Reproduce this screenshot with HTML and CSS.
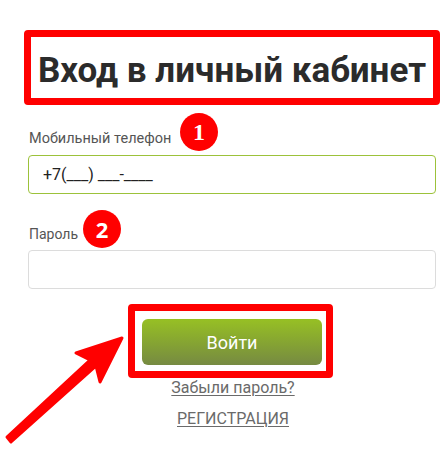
FILE: index.html
```html
<!DOCTYPE html>
<html lang="ru">
<head>
<meta charset="utf-8">
<title>Вход в личный кабинет</title>
<link rel="stylesheet" href="styles.css">
</head>
<body>
<div class="page">
  <div class="title-box">
    <h1 class="title">Вход в личный кабинет</h1>
  </div>
  <form class="form">
    <div class="field field-phone">
      <label class="label">Мобильный телефон</label>
      <span class="badge badge-1">1</span>
      <div class="input input-active">+7(___) ___-____</div>
    </div>
    <div class="field field-pass">
      <label class="label">Пароль</label>
      <span class="badge badge-2">2</span>
      <div class="input"></div>
    </div>
    <div class="btn-frame">
      <button type="button" class="btn">Войти</button>
    </div>
    <div class="links">
      <a class="link" href="#">Забыли пароль?</a>
      <a class="link link-reg" href="#">РЕГИСТРАЦИЯ</a>
    </div>
  </form>
  <svg class="arrow" width="448" height="452" viewBox="0 0 448 452">
    <polygon points="122,338 76,353 90,360 7,437 11,442 96,366 100,382" fill="#ff0000" stroke="#ff0000" stroke-width="3" stroke-linejoin="round"/>
  </svg>
</div>
</body>
</html>
```

FILE: styles.css
```css
* { box-sizing: border-box; }
html, body { margin: 0; padding: 0; background: #fff; }
body { font-family: Roboto, "Liberation Sans", Arial, sans-serif; }

.page {
  position: relative;
  width: 448px;
  height: 452px;
  overflow: hidden;
  padding-top: 30px;
}

.title-box {
  margin-left: 24px;
  width: 416px;
  height: 75px;
  border: 7px solid #ff0000;
  border-radius: 4px;
  padding-top: 14px;
}

.title {
  margin: 0;
  font-size: 35px;
  line-height: 40px;
  font-weight: 700;
  color: #2b2b2b;
  text-align: center;
  white-space: nowrap;
}

.form {
  margin: 0 0 0 28px;
  width: 408px;
  display: flex;
  flex-direction: column;
}

.field { position: relative; }
.field-phone { margin-top: 25px; }
.field-pass { margin-top: 31px; }

.label {
  display: block;
  font-size: 14px;
  line-height: 18px;
  color: #555;
  margin-left: 1px;
  margin-bottom: 7px;
}

.field-phone .label { font-size: 14.5px; }

.badge {
  position: absolute;
  width: 38px;
  height: 38px;
  border-radius: 50%;
  background: #ff0000;
  color: #fff;
  font-weight: 700;
  font-size: 22px;
  line-height: 38px;
  text-align: center;
}
.badge-1 { top: -17px; left: 152px; font-family: "Liberation Serif", serif; font-size: 24px; }
.badge-2 { top: -15px; left: 55px; font-family: "Open Sans", sans-serif; }

.input {
  height: 39px;
  border: 1px solid #dcdcdc;
  border-radius: 4px;
  padding-left: 14px;
  font-size: 16px;
  line-height: 37px;
  color: #222;
}
.input-active { border-color: #9cc23a; }

.btn-frame {
  margin-top: 15px;
  margin-left: 100px;
  width: 205px;
  height: 74px;
  border: 7px solid #ff0000;
  border-radius: 4px;
  padding: 8px 4px 6px 7px;
}

.btn {
  display: block;
  width: 180px;
  height: 46px;
  border: 0;
  border-radius: 6px;
  background: linear-gradient(to bottom, #97c024 0%, #86a532 50%, #768a42 100%);
  color: #fff;
  font-family: Roboto, "Liberation Sans", Arial, sans-serif;
  font-size: 18px;
  font-weight: 400;
  padding: 0;
}

.links {
  display: flex;
  flex-direction: column;
  align-items: center;
  margin-left: 2px;
}

.link {
  color: #6a6a6a;
  font-size: 16px;
  line-height: 20px;
  text-decoration: underline;
  text-underline-offset: 2px;
}
.link-reg {
  margin-top: 11px;
}

.arrow {
  position: absolute;
  left: 0;
  top: 0;
  pointer-events: none;
}
```
